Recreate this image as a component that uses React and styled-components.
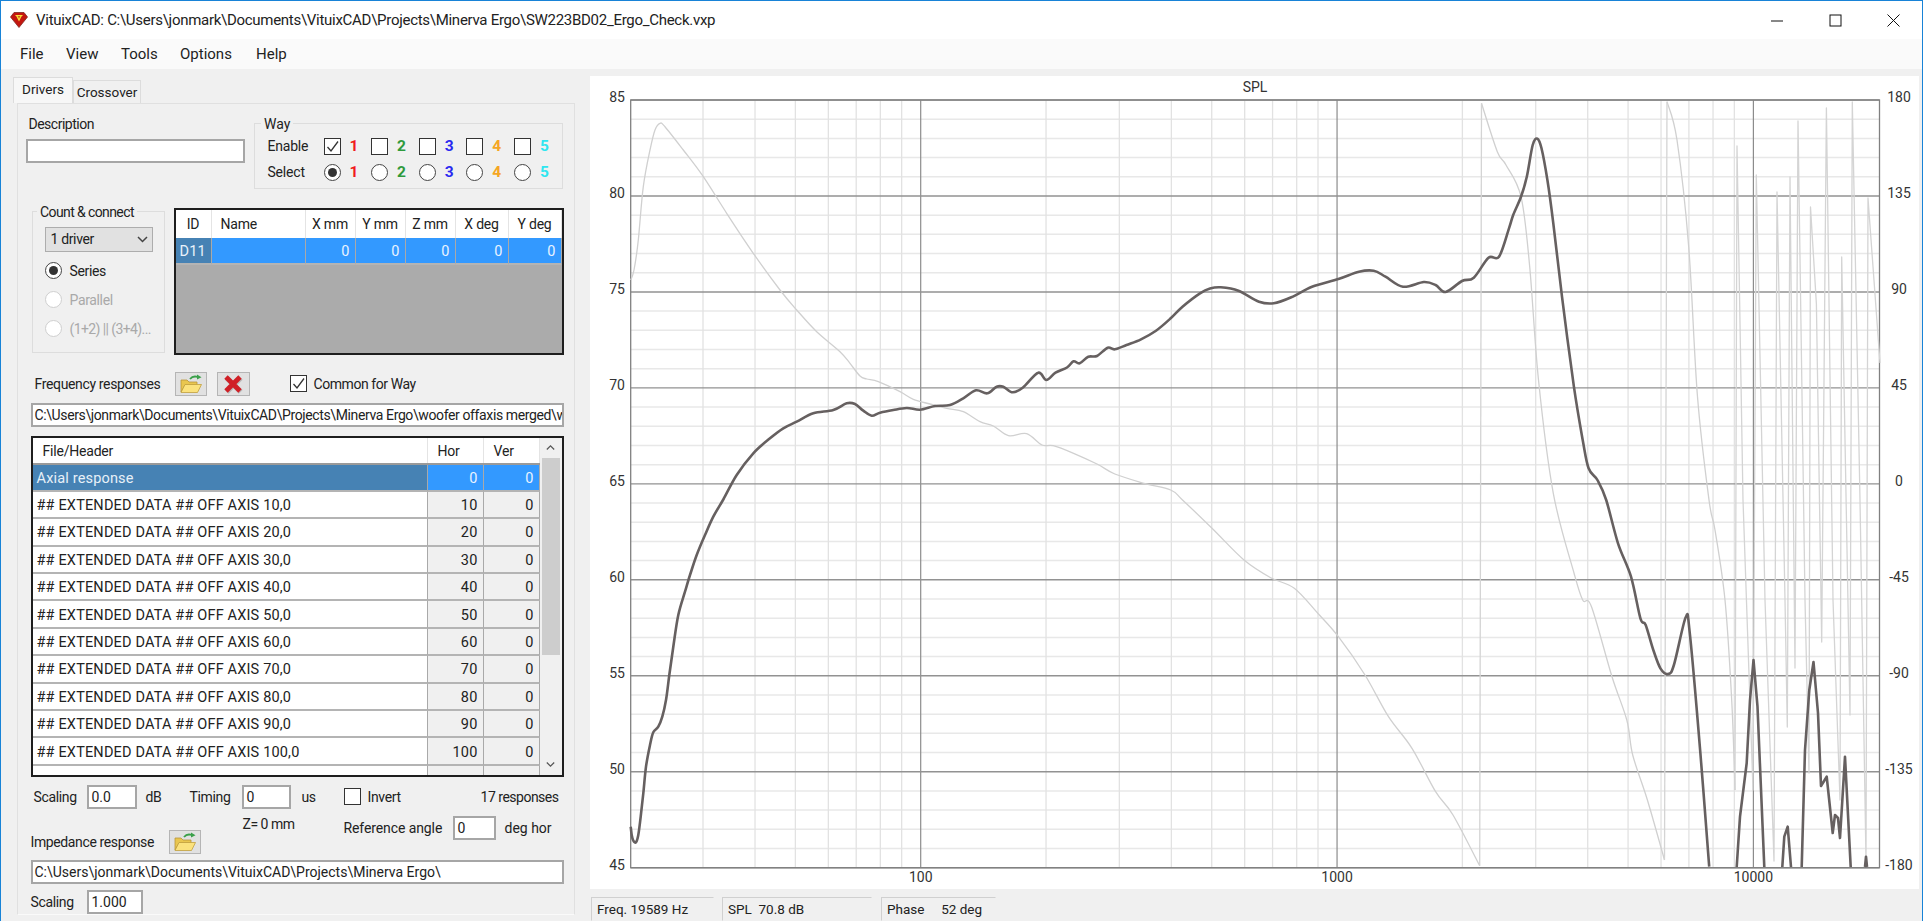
import React from "react";
import styled, { createGlobalStyle } from "styled-components";

const Global = createGlobalStyle`
  html, body { margin: 0; padding: 0; width: 1923px; height: 921px; overflow: hidden; background: #f0f0f0; }
  * { box-sizing: border-box; }
  body { font-family: Roboto, "Liberation Sans", sans-serif; color: #222; }
`;

const Win = styled.div`
  width: 1923px; height: 921px; overflow: hidden; display: flex; flex-direction: column;
  border: 1px solid #1883d7; border-width: 1px 1px 0 1px; background: #f0f0f0;
`;
const TitleBar = styled.div`
  height: 38px; flex: none; background: #fff; display: flex; align-items: center; padding-left: 9px;
`;
const TitleText = styled.span`
  font-size: 15px; margin-left: 8px; color: #222; white-space: nowrap; letter-spacing: -0.28px;
`;
const WinControls = styled.div`
  margin-left: auto; display: flex; height: 100%;
`;
const WinBtn = styled.div`
  width: 58px; display: flex; align-items: center; justify-content: center; color: #111;
`;
const MenuBar = styled.div`
  height: 30px; flex: none; background: #fafafa; display: flex; align-items: center; padding-left: 19px; font-size: 15px;
`;
const MenuItem = styled.span`
  width: ${p => p.$w}px; color: #222;
`;
const Main = styled.div`
  flex: 1; display: flex; padding: 7px 0 0 11px; min-height: 0;
`;
const LeftCol = styled.div`
  width: 563px; flex: none; padding-top: 1px;
`;
const TabStrip = styled.div`
  height: 26px; display: flex; align-items: flex-end; margin-left: 1px; font-size: 13.5px;
`;
const Tab = styled.div`
  width: ${p => p.$w}px; height: ${p => (p.$active ? 26 : 23)}px;
  background: ${p => (p.$active ? "#f7f7f7" : "#f0f0f0")};
  border: 1px solid #dcdcdc; border-bottom: none;
  display: flex; align-items: center; justify-content: center; padding-bottom: ${p => (p.$active ? 3 : 0)}px;
`;
const Panel = styled.div`
  margin-left: 5px; width: 558px; height: 812px; border: 1.5px solid #e0e0e0; border-bottom-color: #fafafa;
  padding: 11.5px 0 0 7.5px; font-size: 14px; display: flex; flex-direction: column; letter-spacing: -0.35px;
`;
const Row = styled.div`
  display: flex; align-items: ${p => p.$align || "center"}; flex: none;
  margin-top: ${p => p.$top || 0}px; margin-left: ${p => p.$left || 0}px;
`;
const Label = styled.span`
  display: inline-block; flex: none; white-space: nowrap; width: ${p => (p.$w ? p.$w + "px" : "auto")};
  margin-left: ${p => p.$ml || 0}px; color: ${p => (p.$off ? "#a9a9a9" : "#222")};
  letter-spacing: ${p => (p.$ls !== undefined ? p.$ls : -0.35)}px;
`;
const DescBlock = styled.div`
  width: 219px; flex: none;
`;
const DescLabel = styled.div`
  height: 16px; line-height: 16px; padding-left: 3px; margin-bottom: 7.5px; letter-spacing: -0.5px;
`;
const Field = styled.div`
  flex: none; height: 24px; width: ${p => p.$w}px; background: #fff; border: 2px solid #a6a6a6;
  padding-left: ${p => p.$pad ?? 3}px; line-height: 20px; white-space: nowrap; overflow: hidden; font-size: 14px;
  margin-left: ${p => p.$ml || 0}px; letter-spacing: ${p => p.$ls || 0}px;
`;
const Group = styled.fieldset`
  margin: 0 0 0 ${p => p.$ml || 0}px; min-width: 0; flex: none; border: 1.5px solid #dddddd;
  width: ${p => p.$w}px; height: ${p => p.$h}px; padding: ${p => p.$pad};
`;
const Legend = styled.legend`
  margin-left: ${p => p.$ml}px; padding: 0 3px; height: 16px; line-height: 16px; font-size: 14px;
  letter-spacing: ${p => p.$ls || 0}px;
`;
const WayGrid = styled.div`
  display: grid; grid-template-columns: 56px repeat(5, 47.6px); grid-auto-rows: 26px; align-items: center;
  padding-top: 1.5px; letter-spacing: 0;
`;
const WayCell = styled.div`
  display: flex; align-items: center; gap: 9px;
`;
const Num = styled.span`
  font-weight: 700; font-size: 15.5px; color: ${p => p.$c}; line-height: 16px;
`;
const Box = styled.span`
  width: 17px; height: 17px; flex: none; background: #fff; border: 1.5px solid #333;
  display: inline-flex; align-items: center; justify-content: center;
`;
const Radio = styled.span`
  width: 17px; height: 17px; flex: none; border-radius: 50%; background: #fff;
  border: 1.5px solid ${p => (p.$off ? "#cfcfcf" : "#444")};
  display: inline-flex; align-items: center; justify-content: center;
  &::after { content: ""; width: 9px; height: 9px; border-radius: 50%; background: ${p => (p.$on ? "#333" : "transparent")}; }
`;
const Combo = styled.div`
  width: 108px; height: 25px; background: #e1e1e1; border: 1.5px solid #adadad; display: flex;
  align-items: center; justify-content: space-between; padding: 0 4px 0 5px; margin-bottom: 4.5px;
`;
const RadioRow = styled.div`
  height: 29px; display: flex; align-items: center; gap: 8px;
`;
const Table = styled.div`
  flex: none; width: ${p => p.$w}px; height: ${p => p.$h}px; border: 2px solid #1e1e1e; background: #ababab;
  margin-left: ${p => p.$ml || 0}px; margin-top: ${p => p.$mt || 0}px; overflow: hidden; letter-spacing: 0;
`;
const GridRow = styled.div`
  display: grid; grid-template-columns: ${p => p.$cols}; height: ${p => p.$h}px;
`;
const HeadCell = styled.div`
  background: #fff; border-right: 1px solid #e4e4e4; display: flex; align-items: center;
  justify-content: ${p => (p.$left ? "flex-start" : "center")}; padding-left: ${p => (p.$left ? p.$left : 0)}px;
  padding-top: 1.5px; letter-spacing: -0.2px;
`;
const BodyCell = styled.div`
  background: ${p => p.$bg}; color: ${p => p.$fg || "#222"}; border-right: 1px solid #a9a9a9; border-bottom: 2px solid #b4b4b4;
  display: flex; align-items: center; white-space: nowrap; overflow: hidden; font-size: 14.5px; letter-spacing: 0.17px;
  justify-content: ${p => (p.$right ? "flex-end" : "flex-start")};
  padding: 2px ${p => (p.$right ? 5 : 0)}px 0 ${p => (p.$right ? 0 : 4)}px;
`;
const RespWrap = styled.div`
  display: flex; height: 100%;
`;
const RespGrid = styled.div`
  width: 507px; flex: none; overflow: hidden; background: #f0f0f0;
`;
const RespHead = styled(GridRow)`
  border-bottom: 2px solid #9a9a9a;
`;
const Scroll = styled.div`
  width: 22px; flex: none; background: #f0f0f0; display: flex; flex-direction: column; align-items: center;
`;
const ScrollBtn = styled.div`
  height: 20px; flex: none; display: flex; align-items: center; justify-content: center;
`;
const Thumb = styled.div`
  width: 18px; height: 197px; background: #cdcdcd; flex: none;
`;
const Spacer = styled.div`
  flex: 1;
`;
const IconBtn = styled.div`
  flex: none; width: ${p => p.$w || 32}px; height: 24px; background: #e1e1e1; border: 1.5px solid #b5b5b5;
  display: flex; align-items: center; justify-content: center; margin-left: ${p => p.$ml || 0}px;
`;
const LeftStack = styled.div`
  width: 313px; flex: none;
`;
const ZLabel = styled.div`
  height: 14px; line-height: 16px; padding-left: 212px; letter-spacing: -0.5px;
`;
const PlotCol = styled.div`
  margin-left: 15px; width: 1329px; flex: none; display: flex; flex-direction: column;
`;
const PlotBox = styled.div`
  height: 813px; background: #fff; flex: none;
`;
const ChartSvg = styled.svg`
  display: block; width: 1329px; height: 813px; font-family: Roboto, "Liberation Sans", sans-serif;
`;
const AxisText = styled.text`
  font-size: 14px; fill: #333;
`;
const StatusBar = styled.div`
  display: flex; margin-top: 8px; height: 26px; font-size: 13.5px;
`;
const StatusBox = styled.div`
  width: ${p => p.$w}px; margin-left: ${p => p.$ml}px; flex: none; border: 1.5px solid #d0d0d0;
  border-right-color: #f0f0f0; border-bottom-color: #f0f0f0; padding: 3px 0 0 5px; white-space: pre;
`;

const Tick = () => (
  <svg width="13" height="13" viewBox="0 0 13 13"><path d="M1.5 7 L5 11 L12 1.5" fill="none" stroke="#333" strokeWidth="1.3" /></svg>
);
const Chevron = ({ up, w = 11, c = "#444" }) => (
  <svg width={w} height="7" viewBox="0 0 11 7"><path d={up ? "M1 6 L5.5 1.5 L10 6" : "M1 1 L5.5 5.5 L10 1"} fill="none" stroke={c} strokeWidth="1.5" /></svg>
);
const Folder = () => (
  <svg width="24" height="20" viewBox="0 0 24 20">
    <path d="M11 5 C13 2.5 16 2 19 3" fill="none" stroke="#3aa04a" strokeWidth="1.8" />
    <path d="M18 0.5 L22.5 3.2 L18 5.5 Z" fill="#3aa04a" />
    <path d="M2 6 H8 L10 8 H18 V11 H6 L2 18 Z" fill="#e9c64f" stroke="#b7953a" strokeWidth="0.8" />
    <path d="M6 10.5 H22.5 L18.5 18.5 H2 Z" fill="#fbe27d" stroke="#c0a03e" strokeWidth="0.8" />
  </svg>
);
const RedX = () => (
  <svg width="22" height="20" viewBox="0 0 22 20">
    <path d="M4 3 L18 17 M18 3 L4 17" stroke="#b9b9b9" strokeWidth="5.4" transform="translate(0.7 0.8)" />
    <path d="M4 3 L18 17 M18 3 L4 17" stroke="#d01f26" strokeWidth="4.8" />
  </svg>
);
const Logo = () => (
  <svg width="18" height="16" viewBox="0 0 18 16">
    <path d="M4 0.5 H14 L17.5 5 L9 15.5 L0.5 5 Z" fill="#c4160f" stroke="#7e2a22" strokeWidth="0.8" />
    <path d="M5 3 H13 L11.5 4.5 L9 9.5 L6.5 4.5 Z" fill="#f7e13a" />
    <path d="M7.6 4 H10.4 L9 6.8 Z" fill="#d2691a" />
  </svg>
);

/* ---- chart data, in window coordinates ---- */
const X0 = 630.7, X1 = 1879.5, Y0 = 100, Y1 = 867.7;
const fx = f => 920.7 + Math.log10(f / 100) * 416.35;
const yStep = (Y1 - Y0) / 40;

const minorF = [];
[10, 100, 1000, 10000].forEach(d => {
  for (let i = 2; i < 10; i++) {
    const f = d * i;
    if (f > 20 && f < 20000) minorF.push(f);
  }
});

/* smooth: catmull-rom through the points */
const smooth = a => {
  let d = `M${a[0][0]} ${a[0][1]}`;
  for (let i = 0; i < a.length - 1; i++) {
    const p0 = a[i - 1] || a[i], p1 = a[i], p2 = a[i + 1], p3 = a[i + 2] || p2;
    const c1 = [p1[0] + (p2[0] - p0[0]) / 6, p1[1] + (p2[1] - p0[1]) / 6];
    const c2 = [p2[0] - (p3[0] - p1[0]) / 6, p2[1] - (p3[1] - p1[1]) / 6];
    d += ` C${c1[0].toFixed(1)} ${c1[1].toFixed(1)} ${c2[0].toFixed(1)} ${c2[1].toFixed(1)} ${p2[0]} ${p2[1]}`;
  }
  return d;
};
const straight = a => "M" + a.map(p => p.join(" ")).join(" L");

const SPL_SMOOTH = [[630.7,826.7],[631.7,835],[633.3,840.7],[636,842.3],[638.3,835],[640.7,816.7],[643.3,793.3],[646,766.7],[650,745],[653.3,732.3],[658.3,726.7],[662.3,716.7],[666,700],[669.3,675],[673.3,646.7],[678.3,615],[685,591.7],[690,575],[696.7,555],[705,535],[713.3,516.7],[723.3,499.5],[736.7,475],[753.3,453.3],[770,438.3],[783.3,428.3],[796.7,421.7],[813.3,413.3],[833.3,410],[846.7,403.3],[855,404],[863.3,410.7],[871.7,415.7],[880,412.7],[893.3,410],[906.7,408],[920,409.7],[935,406],[950,405],[963.3,398.3],[976,390.3],[987.3,393.3],[996.7,386.7],[1003.3,386.7],[1012.7,392.3],[1023,387.5],[1038.2,372.7],[1046.3,380],[1055.5,372.7],[1067,367.5],[1073.5,361.3],[1079.7,363.3],[1088.3,356.7],[1097,356],[1107.7,347.7],[1114.8,349.3],[1126.5,345],[1141,339.3],[1156,330.7],[1170.7,318.3],[1182.5,306.7],[1200,293.3],[1210,288.5],[1220.7,287.3],[1238.4,290.7],[1259,301.7],[1273.7,303.3],[1291.3,297.3],[1312,286.7],[1338.4,279],[1359,271.7],[1373.7,270.7],[1385.5,276.7],[1403,286.7],[1423.8,282],[1435.6,285],[1445.6,292],[1462,281],[1473.8,277.7],[1488.5,257.7],[1499,256.7],[1509,228.3],[1513.2,215],[1521,196.7],[1526.8,176.7],[1532.7,145],[1537.4,138.7],[1541.5,148.3],[1547.4,180],[1553.3,223.3],[1562,296.7],[1573.9,386.7],[1582.7,440],[1588.6,468.3],[1597.4,480],[1606.2,500],[1618,543.3],[1631,576.7],[1640.4,618.3],[1645.7,625],[1653.3,650],[1660.4,668.3],[1668,674],[1673.9,665],[1685.7,617.3],[1689.8,633.3],[1700.4,753.3],[1709.2,866.7]];
const SPL_SPIKES = [
  [[1736.7,867],[1740,816.7],[1746.7,763],[1750,700],[1753.5,660],[1757.5,706.7],[1764.3,867]],
  [[1782.3,867],[1784.3,836.7],[1787.7,826.7],[1791,867]],
  [[1801.7,867],[1805,750],[1809.3,690],[1813.5,662],[1818,713],[1821,786],[1826.7,776.7],[1832.7,833],[1835,815],[1838,818],[1840,838],[1845,756.7],[1850.7,867]],
  [[1865,867],[1866,856.7],[1867,867]],
];
const PHASE_SMOOTH = [
  [[630.7,280],[634,270],[638.3,240],[643.3,186.7],[650,150],[655,130],[660,123.3],[665,126.7],[683.3,150],[703.3,176.7],[726.7,213.3],[753.3,253.3],[780,290],[796.7,310],[816.7,331.7],[840,351.7],[850,363.3],[860,376],[866.7,379],[878.3,381.7],[900,391.7],[913.3,399.3],[930,404],[946.7,408.3],[963.3,411.7],[980,421.7],[993.3,426],[1008.5,435.7],[1026.6,433.7],[1042,445],[1053.2,445.7],[1073.6,453.3],[1097,464],[1114.8,474],[1144,483.3],[1170.7,490],[1182.5,500],[1212,528.3],[1244,560],[1270.7,577.7],[1294.3,588.3],[1317.8,613.3],[1338.4,636.7],[1365,675],[1388.5,716.7],[1412,748.3],[1435.6,791.7],[1453,815],[1479.7,865.7]],
  [[1481.5,103.3],[1497.3,151.7],[1506,165],[1521,196.7],[1529.7,266.7],[1538.5,380],[1553.3,493.3],[1574,573],[1582.7,600],[1591.5,606.7],[1612,676.7],[1626.8,720],[1632.7,755],[1647.4,800],[1664.5,860]],
  [[1667,101.7],[1677,140],[1688.7,246.7],[1697.5,396.7],[1709,500],[1715,530],[1725,600],[1731.7,700],[1735,790]],
];
const PHASE_JOINS = [
  [[1479.7,865.7],[1481.5,103.3]],
  [[1664.5,860],[1667,101.7]],
  [[1735,790],[1737,146],[1743,500],[1753,790],[1756.3,175],[1765,600],[1774,861],[1777,192],[1785,600],[1787.3,727],[1790,177],[1795,668],[1798,121],[1805,600],[1809,773],[1810.5,207],[1816.4,304],[1821.7,642],[1826.4,108],[1833,600],[1840,800],[1841.7,257],[1850,715],[1852.3,102],[1860,500],[1866,860],[1868,198],[1880,363]],
];

const leftLabels = [85, 80, 75, 70, 65, 60, 55, 50, 45];
const rightLabels = [180, 135, 90, 45, 0, -45, -90, -135, -180];
const steps41 = Array.from({ length: 41 }, (_, i) => i);

const Chart = () => (
  <ChartSvg viewBox="590 76 1329 813">
    {steps41.filter(i => i % 5 !== 0).map(i => (
      <line key={i} x1={X0} x2={X1} y1={Y0 + i * yStep} y2={Y0 + i * yStep} stroke="#e8e8e8" strokeWidth="1.5" />
    ))}
    {minorF.map(f => (
      <line key={f} x1={fx(f)} x2={fx(f)} y1={Y0} y2={Y1} stroke="#e2e2e2" strokeWidth="1.3" />
    ))}
    {[100, 1000, 10000].map(f => (
      <line key={f} x1={fx(f)} x2={fx(f)} y1={Y0} y2={Y1} stroke="#8c8c8c" strokeWidth="1.2" />
    ))}
    {steps41.filter(i => i % 5 === 0).map(i => (
      <line key={i} x1={X0} x2={X1} y1={Y0 + i * yStep} y2={Y0 + i * yStep} stroke="#929292" strokeWidth="1.4" />
    ))}
    <rect x={X0} y={Y0} width={X1 - X0} height={Y1 - Y0} fill="none" stroke="#808080" strokeWidth="1.3" />
    {PHASE_SMOOTH.map((s, i) => <path key={i} d={smooth(s)} fill="none" stroke="#d0d0d0" strokeWidth="1.3" />)}
    {PHASE_JOINS.map((s, i) => <path key={i} d={straight(s)} fill="none" stroke="#d4d4d4" strokeWidth="1.3" strokeLinejoin="round" />)}
    <path d={smooth(SPL_SMOOTH)} fill="none" stroke="#666060" strokeWidth="2.6" strokeLinejoin="round" />
    {SPL_SPIKES.map((s, i) => <path key={i} d={straight(s)} fill="none" stroke="#666060" strokeWidth="2.6" strokeLinejoin="round" />)}
    <AxisText x="1255" y="92" textAnchor="middle">SPL</AxisText>
    {leftLabels.map((v, i) => (
      <AxisText key={v} x="625" y={Y0 + i * 5 * yStep + 2} textAnchor="end">{v}</AxisText>
    ))}
    {rightLabels.map((v, i) => (
      <AxisText key={v} x="1899" y={Y0 + i * 5 * yStep + 2} textAnchor="middle">{v}</AxisText>
    ))}
    {[100, 1000, 10000].map(f => (
      <AxisText key={f} x={fx(f)} y="882" textAnchor="middle">{f}</AxisText>
    ))}
  </ChartSvg>
);

const ways = [
  ["1", "#f01c1c"], ["2", "#2e9a3c"], ["3", "#2a2af0"], ["4", "#f5a623"], ["5", "#2ee6f0"],
];
const driverCols = "36px 94px 50px 50px 50px 53px 53px";
const respCols = "395px 56px 56px";
const angles = [10, 20, 30, 40, 50, 60, 70, 80, 90, 100];

export default function App() {
  return (
    <>
      <Global />
      <Win>
        <TitleBar>
          <Logo />
          <TitleText>VituixCAD: C:\Users\jonmark\Documents\VituixCAD\Projects\Minerva Ergo\SW223BD02_Ergo_Check.vxp</TitleText>
          <WinControls>
            <WinBtn><svg width="13" height="13" viewBox="0 0 13 13"><path d="M0 7 H12" stroke="#111" strokeWidth="1" /></svg></WinBtn>
            <WinBtn><svg width="13" height="13" viewBox="0 0 13 13"><rect x="1" y="1" width="11" height="11" fill="none" stroke="#111" strokeWidth="1" /></svg></WinBtn>
            <WinBtn><svg width="13" height="13" viewBox="0 0 13 13"><path d="M0.5 0.5 L12.5 12.5 M12.5 0.5 L0.5 12.5" stroke="#111" strokeWidth="1" /></svg></WinBtn>
          </WinControls>
        </TitleBar>
        <MenuBar>
          <MenuItem $w={46}>File</MenuItem>
          <MenuItem $w={55}>View</MenuItem>
          <MenuItem $w={59}>Tools</MenuItem>
          <MenuItem $w={76}>Options</MenuItem>
          <MenuItem $w={50}>Help</MenuItem>
        </MenuBar>
        <Main>
          <LeftCol>
            <TabStrip>
              <Tab $active $w={60}>Drivers</Tab>
              <Tab $w={68}>Crossover</Tab>
            </TabStrip>
            <Panel>
              <Row $align="flex-start">
                <DescBlock>
                  <DescLabel>Description</DescLabel>
                  <Field $w={219} />
                </DescBlock>
                <Group $w={309} $h={73} $ml={9} $pad="0 0 0 13px">
                  <Legend $ml={-6.5}>Way</Legend>
                  <WayGrid>
                    <Label $ls={-0.2}>Enable</Label>
                    {ways.map(([n, c], i) => (
                      <WayCell key={n}><Box>{i === 0 && <Tick />}</Box><Num $c={c}>{n}</Num></WayCell>
                    ))}
                    <Label $ls={-0.2}>Select</Label>
                    {ways.map(([n, c], i) => (
                      <WayCell key={n}><Radio $on={i === 0} /><Num $c={c}>{n}</Num></WayCell>
                    ))}
                  </WayGrid>
                </Group>
              </Row>
              <Row $align="flex-start" $top={15} $left={6}>
                <Group $w={133} $h={149} $pad="7px 0 0 12px">
                  <Legend $ml={-7.5} $ls={-0.6}>Count &amp; connect</Legend>
                  <Combo><span>1 driver</span><Chevron /></Combo>
                  <RadioRow><Radio $on /><Label>Series</Label></RadioRow>
                  <RadioRow><Radio $off /><Label $off>Parallel</Label></RadioRow>
                  <RadioRow><Radio $off /><Label $off $ls={-0.6}>(1+2) || (3+4)...</Label></RadioRow>
                </Group>
                <Table $w={390} $h={147} $ml={9} $mt={4}>
                  <GridRow $cols={driverCols} $h={28}>
                    <HeadCell>ID</HeadCell>
                    <HeadCell $left={9}>Name</HeadCell>
                    <HeadCell>X mm</HeadCell>
                    <HeadCell>Y mm</HeadCell>
                    <HeadCell>Z mm</HeadCell>
                    <HeadCell>X deg</HeadCell>
                    <HeadCell>Y deg</HeadCell>
                  </GridRow>
                  <GridRow $cols={driverCols} $h={27}>
                    <BodyCell $bg="#4682b4" $fg="#eaf2fa">D11</BodyCell>
                    <BodyCell $bg="#3399ff" />
                    {[0, 1, 2, 3, 4].map(k => <BodyCell key={k} $bg="#3399ff" $fg="#e8f3ff" $right>0</BodyCell>)}
                  </GridRow>
                </Table>
              </Row>
              <Row $top={17} $left={9}>
                <Label $w={140}>Frequency responses</Label>
                <IconBtn><Folder /></IconBtn>
                <IconBtn $w={33} $ml={10}><RedX /></IconBtn>
                <Label $w={40} />
                <Box><Tick /></Box>
                <Label $ml={7} $ls={-0.43}>Common for Way</Label>
              </Row>
              <Row $top={7} $left={5}>
                <Field $w={533} $ls={-0.38} $pad={2}>C:\Users\jonmark\Documents\VituixCAD\Projects\Minerva Ergo\woofer offaxis merged\woofer</Field>
              </Row>
              <Row $top={9} $left={5}>
                <Table $w={533} $h={341}>
                  <RespWrap>
                    <RespGrid>
                      <RespHead $cols={respCols} $h={27}>
                        <HeadCell $left={10}>File/Header</HeadCell>
                        <HeadCell $left={10}>Hor</HeadCell>
                        <HeadCell $left={10}>Ver</HeadCell>
                      </RespHead>
                      <GridRow $cols={respCols} $h={27.4}>
                        <BodyCell $bg="#4682b4" $fg="#e6f0f8">Axial response</BodyCell>
                        <BodyCell $bg="#3399ff" $fg="#e8f3ff" $right>0</BodyCell>
                        <BodyCell $bg="#3399ff" $fg="#e8f3ff" $right>0</BodyCell>
                      </GridRow>
                      {angles.map(a => (
                        <GridRow key={a} $cols={respCols} $h={27.4}>
                          <BodyCell $bg="#fff">## EXTENDED DATA ## OFF AXIS {a},0</BodyCell>
                          <BodyCell $bg="#f0f0f0" $right>{a}</BodyCell>
                          <BodyCell $bg="#f0f0f0" $right>0</BodyCell>
                        </GridRow>
                      ))}
                      <GridRow $cols={respCols} $h={27.4}>
                        <BodyCell $bg="#fff" />
                        <BodyCell $bg="#f0f0f0" $right />
                        <BodyCell $bg="#f0f0f0" $right />
                      </GridRow>
                    </RespGrid>
                    <Scroll>
                      <ScrollBtn><Chevron up w={9} c="#555" /></ScrollBtn>
                      <Thumb />
                      <Spacer />
                      <ScrollBtn><Chevron w={9} c="#555" /></ScrollBtn>
                    </Scroll>
                  </RespWrap>
                </Table>
              </Row>
              <Row $top={8} $left={8} style={{ width: 525 }}>
                <Label $w={53}>Scaling</Label>
                <Field $w={50}>0.0</Field>
                <Label $ml={9} $w={44}>dB</Label>
                <Label $w={52}>Timing</Label>
                <Field $w={49}>0</Field>
                <Label $ml={11} $w={42}>us</Label>
                <Box />
                <Label $ml={7}>Invert</Label>
                <Label $ls={-0.5} style={{ marginLeft: "auto" }}>17 responses</Label>
              </Row>
              <Row $align="flex-start" $top={7} $left={5}>
                <LeftStack>
                  <ZLabel>Z= 0 mm</ZLabel>
                  <Row>
                    <Label $w={138} $ls={-0.38}>Impedance response</Label>
                    <IconBtn><Folder /></IconBtn>
                  </Row>
                </LeftStack>
                <Row>
                  <Label $w={109} $ls={-0.1}>Reference angle</Label>
                  <Field $w={43}>0</Field>
                  <Label $ml={9} $ls={0}>deg hor</Label>
                </Row>
              </Row>
              <Row $top={6} $left={5}>
                <Field $w={533} $pad={2}>C:\Users\jonmark\Documents\VituixCAD\Projects\Minerva Ergo\</Field>
              </Row>
              <Row $top={6} $left={5}>
                <Label $w={56}>Scaling</Label>
                <Field $w={56}>1.000</Field>
              </Row>
            </Panel>
          </LeftCol>
          <PlotCol>
            <PlotBox><Chart /></PlotBox>
            <StatusBar>
              <StatusBox $w={123} $ml={1}>Freq. 19589 Hz</StatusBox>
              <StatusBox $w={150} $ml={8}>SPL  70.8 dB</StatusBox>
              <StatusBox $w={115} $ml={9}>Phase     52 deg</StatusBox>
            </StatusBar>
          </PlotCol>
        </Main>
      </Win>
    </>
  );
}
